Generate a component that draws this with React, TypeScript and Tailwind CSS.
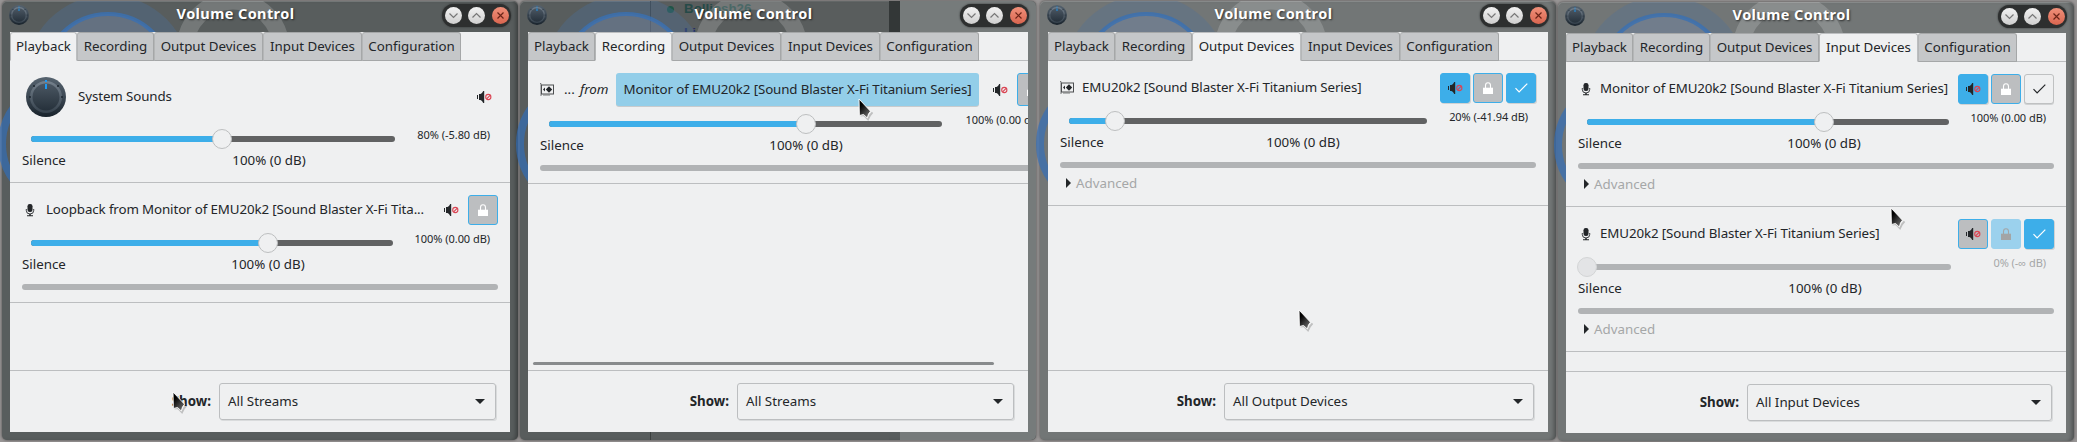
import React from 'react'
import type { ReactNode } from 'react'

const TABS = [
    { name: 'Playback', width: 'w-[67px]' },
    { name: 'Recording', width: 'w-[77px]' },
    { name: 'Output Devices', width: 'w-[109px]' },
    { name: 'Input Devices', width: 'w-[99px]' },
    { name: 'Configuration', width: 'w-[99px]' },
]

function Knob({ size }: { size: number }) {
    return (
        <svg width={size} height={size} viewBox="0 0 40 40" className="shrink-0">
            <defs>
                <linearGradient id="knobRim" x1="0" y1="0" x2="0" y2="1">
                    <stop offset="0" stopColor="#56636f" />
                    <stop offset="0.5" stopColor="#3c4853" />
                    <stop offset="1" stopColor="#18222b" />
                </linearGradient>
                <linearGradient id="knobRing" x1="0" y1="0" x2="0" y2="1">
                    <stop offset="0" stopColor="#75818d" />
                    <stop offset="1" stopColor="#36424d" />
                </linearGradient>
                <linearGradient id="knobFace" x1="0" y1="0" x2="0" y2="1">
                    <stop offset="0" stopColor="#4b5763" />
                    <stop offset="1" stopColor="#26313b" />
                </linearGradient>
            </defs>
            <circle cx="20" cy="20" r="20" fill="url(#knobRim)" />
            <circle cx="20" cy="20" r="16" fill="url(#knobRing)" />
            <circle cx="20" cy="20" r="13.5" fill="url(#knobFace)" />
            <g fill="#1c262f">
                <circle cx="4" cy="20" r="1" />
                <circle cx="36" cy="20" r="1" />
                <circle cx="8" cy="9" r="1" />
                <circle cx="32" cy="9" r="1" />
            </g>
            <rect x="19" y="3" width="2" height="2" fill="#1d99f3" />
            <rect x="19" y="7" width="2" height="5" fill="#1d99f3" />
        </svg>
    )
}

function MuteIcon() {
    return (
        <svg width="15" height="12" viewBox="0 0 15 12" className="shrink-0">
            <rect x="0" y="4" width="1" height="4" fill="#232629" />
            <path d="M2 3h1.5C4.5 2.6 5.6 1.6 6.2 0H7.2v12H6.2C5.6 10.4 4.5 9.4 3.5 9H2z" fill="#232629" />
            <circle cx="11.3" cy="6" r="2.6" fill="none" stroke="#da4453" strokeWidth="1.1" />
            <path d="M9.6 7.8l3.5-3.5" stroke="#da4453" strokeWidth="1.1" />
        </svg>
    )
}

function LockIcon({ color }: { color: string }) {
    return (
        <svg width="10" height="12" viewBox="0 0 10 12">
            <path d="M2.5 6V3.5a2.5 2.8 0 0 1 5 0V6" fill="none" stroke={color} strokeWidth="1.1" />
            <rect x="0" y="5.7" width="10" height="6.3" fill={color} />
        </svg>
    )
}

function CheckIcon({ color }: { color: string }) {
    return (
        <svg width="13" height="10" viewBox="0 0 13 10">
            <path d="M.5 5.2l3.6 3.6L12.3.6" fill="none" stroke={color} strokeWidth="1.2" />
        </svg>
    )
}

function MicIcon() {
    return (
        <svg width="16" height="13" viewBox="0 0 16 13" className="shrink-0">
            <rect x="5.5" y="0" width="5" height="8" rx="2.2" fill="#232629" />
            <path d="M4.3 5v1.5a3.7 3.5 0 0 0 7.4 0V5" fill="none" stroke="#232629" strokeWidth="0.9" />
            <path d="M7.3 10h1.4v1.3H11v1H5v-1h2.3z" fill="#232629" />
        </svg>
    )
}

function CardIcon() {
    return (
        <svg width="15" height="14" viewBox="0 0 15 14" className="shrink-0">
            <path d="M0 .5h1V13" fill="none" stroke="#77797b" />
            <rect x="1.5" y="2" width="12" height="9" fill="none" stroke="#4d4f51" />
            <path d="M3 12h7" stroke="#77797b" />
            <path d="M9 3.3l3.2 3.2L9 9.7 5.8 6.500z" fill="#232629" />
            <path d="M3 6.500l2-2v4z" fill="#232629" />
        </svg>
    )
}

function Cursor({ place }: { place: string }) {
    return (
        <svg width="16" height="24" viewBox="-1 -1 16 24" className={`absolute z-20 ${place}`}>
            <defs>
                <linearGradient id="cursorFill" x1="0" y1="0" x2="0.7" y2="1">
                    <stop offset="0.3" stopColor="#000" />
                    <stop offset="1" stopColor="#6a6a6a" />
                </linearGradient>
            </defs>
            <path d="M1.5 16.5l3.5-.5 4 4.3 2-4 2.5-3" fill="none" stroke="#0003" strokeWidth="2" />
            <path d="M0 0L.4 16.5 4.6 15.5 8.3 19 9.5 15 11.5 12.2z" fill="url(#cursorFill)" stroke="#fff" strokeWidth="0.9" />
        </svg>
    )
}

type Look = 'on' | 'off' | 'pressed' | 'faded'

const LOOKS: Record<Look, string> = {
    on: 'bg-[#3daee9] border-[#3daee9] shadow-[1px_1px_0_#d0d2d3]',
    off: 'bg-[#eff0f1] border-[#bfc1c2] shadow-[0_1px_0_#d0d2d3]',
    pressed: 'bg-[#bcbec0] border-[#3daee9]',
    faded: 'bg-[#9bd1ed] border-[#9bd1ed]',
}

function ToolButton({ look, children }: { look: Look; children: ReactNode }) {
    return (
        <button className={`flex h-full w-[30px] shrink-0 items-center justify-center rounded-[3px] border ${LOOKS[look]}`}>
            {children}
        </button>
    )
}

interface VolumeProps {
    track: number
    value: number
    mark: number
    label: string
    disabled?: boolean
}

// slider with its reading on the right and the scale labels under it
function Volume({ track, value, mark, label, disabled }: VolumeProps) {
    return (
        <>
            <div className="flex h-5 justify-between">
                <div
                    className={`relative mt-[7px] ml-[9px] h-1.5 shrink-0 rounded-full ${disabled ? 'bg-[#b1b3b5]' : 'bg-[#616263]'}`}
                    style={{ width: track }}
                >
                    {!disabled && <div className="h-1.5 rounded-full bg-[#3daee9]" style={{ width: value }} />}
                    <div
                        className={`absolute -top-[7px] size-5 -translate-x-1/2 rounded-full border ${disabled ? 'border-[#d3d5d6] bg-[#e3e4e6]' : 'border-[#bdbfc0] bg-[#eff0f1]'}`}
                        style={{ left: value }}
                    />
                </div>
                <span className={`mr-2 text-[11px] leading-3 tracking-[-0.05px] whitespace-nowrap ${disabled ? 'text-[#a5a7a8]' : ''}`}>
                    {label}
                </span>
            </div>
            <div className="mt-0.5 flex h-5 items-center">
                <span className="w-[60px]">Silence</span>
                <span className="w-[100px] text-center whitespace-nowrap" style={{ marginLeft: mark - 110 }}>
                    100% (0 dB)
                </span>
            </div>
        </>
    )
}

function Level() {
    return <div className="mt-[9px] h-1.5 rounded-full bg-[#b1b3b5]" />
}

function Advanced() {
    return (
        <div className="mt-2 flex h-4 items-center pl-1.5 text-[#a5a7a8]">
            <svg width="5" height="10" viewBox="0 0 5 10" className="mr-[5px] mb-0.5">
                <path d="M0 0l5 5-5 5z" fill="#232629" />
            </svg>
            Advanced
        </div>
    )
}

function Stream({ children, pad = 'pt-3 pb-3' }: { children: ReactNode; pad?: string }) {
    return <section className={`border-b border-[#bcbec0] px-3 ${pad}`}>{children}</section>
}

function TitleButton({ close, children }: { close?: boolean; children: ReactNode }) {
    return (
        <span
            className={`flex size-[17px] items-center justify-center rounded-full ${close ? 'bg-linear-to-b from-[#f0907a] to-[#d9654f]' : 'bg-linear-to-b from-[#f2f2f2] to-[#cfcfcf]'}`}
        >
            <svg width="11" height="11" viewBox="0 0 11 11" fill="none" stroke={close ? '#6b2418' : '#777'} strokeWidth="1.2">
                {children}
            </svg>
        </span>
    )
}

// what shows through the translucent window frame
function Backdrop({ dark }: { dark?: boolean }) {
    return (
        <svg width="516" height="440" className="absolute top-0 left-0 -z-10 overflow-visible">
            <circle cx="61" cy="143" r="61" fill="none" stroke="#2f6fbd" strokeOpacity="0.65" strokeWidth="8" />
            <svg width="516" height="32">
                <circle cx="106" cy="77" r="83" fill="#4b6f9c" fillOpacity={dark ? 0.35 : 0.3} />
                <circle cx="106" cy="77" r="64" fill="#8a93a5" fillOpacity="0.3" stroke="#3a70b3" strokeOpacity="0.8" strokeWidth="4" />
                <circle cx="231" cy="48" r="48" fill="none" stroke="#fff" strokeOpacity="0.17" strokeWidth="17" />
            </svg>
        </svg>
    )
}

interface WindowProps {
    active: string
    filter: string
    select: string
    frame: string
    dark?: boolean
    behind?: ReactNode
    scrollbar?: boolean
    children: ReactNode
}

function MixerWindow({ active, filter, select, frame, dark, behind, scrollbar, children }: WindowProps) {
    return (
        <div
            className={`relative isolate flex h-[439px] w-[516px] shrink-0 flex-col rounded-[5px] px-2 pb-2 shadow-[inset_-4px_0_4px_-2px_#0005,inset_0_1px_0_#ffffff30,0_0_3px_#0008] ${frame}`}
        >
            {behind}
            <Backdrop dark={dark} />
            <div className="flex h-[31px] shrink-0 items-start">
                <div className="mt-1 -ml-px w-[70px]">
                    <Knob size={20} />
                </div>
                <h1 className="mt-px flex-1 pr-[50px] text-center text-[14.5px] leading-[22px] font-bold tracking-[0.4px] text-white [text-shadow:1px_1px_2px_#0009]">
                    Volume Control
                </h1>
                <div className="mt-[3px] -mr-px flex h-[23px] w-[69px] items-center justify-between rounded-full bg-[#2d2f2f] px-[2.5px] shadow-[0_0_2px_#2d2f2f]">
                    <TitleButton>
                        <path d="M1.5 3.5l4 4 4-4" />
                    </TitleButton>
                    <TitleButton>
                        <path d="M1.5 7.5l4-4 4 4" />
                    </TitleButton>
                    <TitleButton close>
                        <path d="M2.5 2.5l6 6M8.5 2.5l-6 6" />
                    </TitleButton>
                </div>
            </div>
            <div className="flex h-[400px] w-[500px] flex-col overflow-hidden bg-[#eff0f1]">
                <nav className="flex h-[29px] shrink-0">
                    {TABS.map((tab) => (
                        <div
                            key={tab.name}
                            className={`flex items-center justify-center rounded-t-[3px] border border-l-[#b4b6b7] ${tab.width} ${
                                tab.name === active
                                    ? 'border-[#bcbec0] border-b-transparent bg-[#eff0f1]'
                                    : 'border-[#a5a7a8] bg-[#c5c7c9]'
                            }`}
                        >
                            {tab.name}
                        </div>
                    ))}
                    <div className="flex-1 border-b border-[#bcbec0]" />
                </nav>
                <main className="flex-1">{children}</main>
                {scrollbar && <div className="mb-[5px] ml-[5px] h-[3px] w-[461px] rounded-full bg-[#888b8d]" />}
                <footer className="flex h-[62px] shrink-0 items-start justify-end border-t border-[#bcbec0] pt-3 pr-3.5">
                    <b className="mr-2 leading-[37px]">Show:</b>
                    <div className={`flex h-[37px] items-center justify-between rounded-[3px] border border-[#bcbec0] pr-2.5 pl-2 shadow-[1px_1px_0_#d9dbdc] ${select}`}>
                        {filter}
                        <svg width="10" height="5" viewBox="0 0 10 5">
                            <path d="M0 0h10L5 5z" fill="#232629" />
                        </svg>
                    </div>
                </footer>
            </div>
        </div>
    )
}

// chat window sitting behind the second mixer
function GhostWindow() {
    return (
        <div className="absolute inset-0 -z-10 flex overflow-hidden rounded-[5px] font-['Liberation_Sans',sans-serif] text-[13.33px] font-bold">
            <div className="w-[131px] border-r border-[#3c403f]" />
            <div className="w-[238px] bg-[#5a5e5e]/60 pt-px pl-4 leading-[14px] text-[#264a48]">
                <div className="flex items-center gap-2.5">
                    <i className="size-[7px] rounded-full bg-[#1f5546]" />
                    Bolliosh26
                </div>
                <div className="mt-2.5 pl-[17px] text-[#272f62]">Li</div>
            </div>
            <div className="h-[31px] w-[11px] bg-[#333737]" />
            <div className="flex-1 bg-[#767b7b]" />
        </div>
    )
}

export default function App() {
    return (
        <div className="relative flex h-[442px] w-[2077px] overflow-hidden bg-[#999696] pt-px pl-0.5 font-['Noto_Sans',sans-serif] text-[13.33px] text-[#232629]">
            <MixerWindow active="Playback" filter="All Streams" select="w-[277px]" frame="bg-[#585d5d]" dark>
                <Stream pad="pt-4 pb-[11px]">
                    <div className="mb-3 flex h-10 items-center pr-1.5 pl-1">
                        <Knob size={40} />
                        <span className="ml-3 flex-1 tracking-[-0.1px]">System Sounds</span>
                        <MuteIcon />
                    </div>
                    <Volume track={364} value={191} mark={247} label="80% (-5.80 dB)" />
                </Stream>
                <Stream>
                    <div className="mb-2 flex h-[30px] items-center">
                        <MicIcon />
                        <span className="ml-2 w-[398px] tracking-[-0.12px] whitespace-nowrap">
                            Loopback from Monitor of EMU20k2 [Sound Blaster X-Fi Tita...
                        </span>
                        <MuteIcon />
                        <span className="ml-[9px] h-full">
                            <ToolButton look="pressed">
                                <LockIcon color="#fff" />
                            </ToolButton>
                        </span>
                    </div>
                    <Volume track={362} value={237} mark={246} label="100% (0.00 dB)" />
                    <Level />
                </Stream>
            </MixerWindow>

            <div className="ml-0.5">
                <MixerWindow
                    active="Recording"
                    filter="All Streams"
                    select="w-[277px]"
                    frame="bg-[#585d5d]"
                    dark
                    behind={<GhostWindow />}
                    scrollbar
                >
                    <section className="w-[533px] border-b border-[#bcbec0] p-3">
                        <div className="mb-2 flex h-[33px] items-center">
                            <CardIcon />
                            <span className="ml-[9px] w-[16px]">...</span>
                            <i className="w-9">from</i>
                            <button className="h-full w-[363px] shrink-0 rounded-[3px] bg-[#93cee9] tracking-[-0.12px] whitespace-nowrap shadow-[0_1px_0_#c8cbcd]">
                                Monitor of EMU20k2 [Sound Blaster X-Fi Titanium Series]
                            </button>
                            <span className="ml-3.5">
                                <MuteIcon />
                            </span>
                            <span className="ml-[9px] h-full">
                                <ToolButton look="pressed">
                                    <LockIcon color="#fff" />
                                </ToolButton>
                            </span>
                        </div>
                        <Volume track={393} value={257} mark={266} label="100% (0.00 dB)" />
                        <Level />
                    </section>
                </MixerWindow>
            </div>

            <div className="ml-1">
                <MixerWindow active="Output Devices" filter="All Output Devices" select="w-[310px]" frame="bg-[#727676]">
                    <Stream pad="pt-3 pb-[13px]">
                        <div className="mb-2 flex h-[30px] items-center gap-[3px]">
                            <CardIcon />
                            <span className="ml-1 flex-1 tracking-[-0.12px]">EMU20k2 [Sound Blaster X-Fi Titanium Series]</span>
                            <ToolButton look="on">
                                <MuteIcon />
                            </ToolButton>
                            <ToolButton look="pressed">
                                <LockIcon color="#fff" />
                            </ToolButton>
                            <ToolButton look="on">
                                <CheckIcon color="#fff" />
                            </ToolButton>
                        </div>
                        <Volume track={358} value={46} mark={243} label="20% (-41.94 dB)" />
                        <Level />
                        <Advanced />
                    </Stream>
                </MixerWindow>
            </div>

            <div className="mt-px ml-0.5">
                <MixerWindow active="Input Devices" filter="All Input Devices" select="w-[305px]" frame="bg-[#727676]">
                    <Stream pad="pt-3 pb-[13px]">
                        <div className="mb-2 flex h-[30px] items-center gap-[3px]">
                            <MicIcon />
                            <span className="ml-[3px] flex-1 tracking-[-0.12px] whitespace-nowrap">
                                Monitor of EMU20k2 [Sound Blaster X-Fi Titanium Series]
                            </span>
                            <ToolButton look="on">
                                <MuteIcon />
                            </ToolButton>
                            <ToolButton look="pressed">
                                <LockIcon color="#fff" />
                            </ToolButton>
                            <ToolButton look="off">
                                <CheckIcon color="#232629" />
                            </ToolButton>
                        </div>
                        <Volume track={362} value={237} mark={246} label="100% (0.00 dB)" />
                        <Level />
                        <Advanced />
                    </Stream>
                    <Stream pad="pt-3 pb-[13px]">
                        <div className="mb-2 flex h-[30px] items-center gap-[3px]">
                            <MicIcon />
                            <span className="ml-[3px] flex-1 tracking-[-0.12px]">EMU20k2 [Sound Blaster X-Fi Titanium Series]</span>
                            <ToolButton look="pressed">
                                <MuteIcon />
                            </ToolButton>
                            <ToolButton look="faded">
                                <LockIcon color="#a3a5a6" />
                            </ToolButton>
                            <ToolButton look="on">
                                <CheckIcon color="#fff" />
                            </ToolButton>
                        </div>
                        <Volume track={364} value={0} mark={247} label="0% (-∞ dB)" disabled />
                        <Level />
                        <Advanced />
                    </Stream>
                </MixerWindow>
            </div>

            <Cursor place="left-[172px] top-[391px]" />
            <Cursor place="left-[858px] top-[98px]" />
            <Cursor place="left-[1298px] top-[309px]" />
            <Cursor place="left-[1890px] top-[207px]" />
        </div>
    )
}
